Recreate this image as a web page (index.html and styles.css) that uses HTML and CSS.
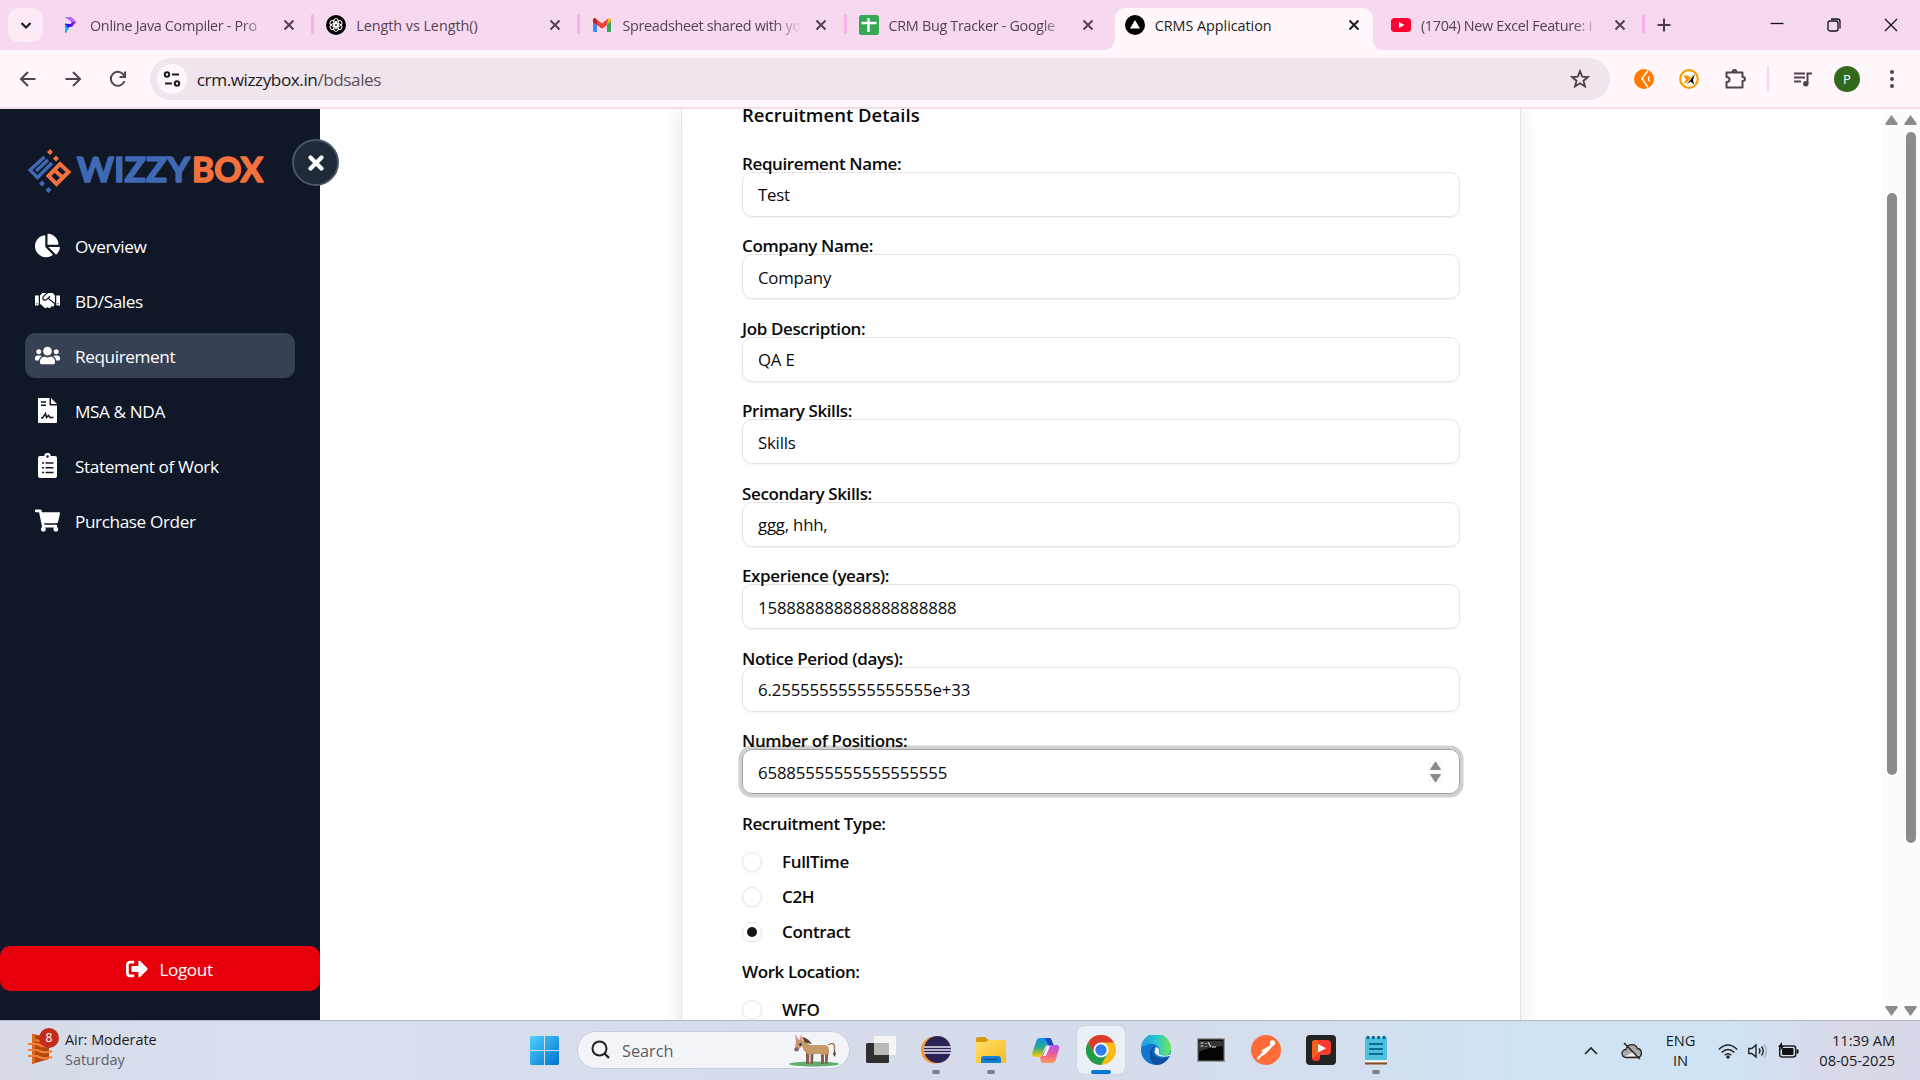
FILE: index.html
```html
<!DOCTYPE html>
<html lang="en">
<head>
<meta charset="utf-8">
<title>CRMS Application</title>
<link rel="stylesheet" href="styles.css">
</head>
<body>
<div class="screen">

<header class="tabstrip">
  <div class="tab-search"><svg width="16" height="16" viewBox="0 0 16 16"><path d="M3.500 6 8 10.500 12.500 6" fill="none" stroke="#1d1b20" stroke-width="2.200"/></svg></div>
  <div class="tab">
    <svg class="fav" viewBox="0 0 20 20"><path d="M5 2h6l5 5-4 5H8L12 7z" fill="#7a1cf0"/><path d="M5 2h6l5 5h-4z" fill="#b06bff"/><path d="M5 8l4 1v4l-3 5H5z" fill="#12b5f5"/><path d="M5 9h7l-4 4z" fill="#3b12e8"/></svg>
    <span class="tab-title fade">Online Java Compiler - Pro</span><span class="tab-x"><svg width="12" height="12" viewBox="0 0 12 12"><path d="M1.500 1.500l9 9M10.500 1.500l-9 9"/></svg></span>
  </div>
  <div class="tab">
    <svg class="fav" viewBox="0 0 20 20"><circle cx="10" cy="10" r="10"/><g fill="none" stroke="#fff" stroke-width="1"><ellipse cx="10" cy="7.500" rx="2.700" ry="4"/><ellipse cx="10" cy="7.500" rx="2.700" ry="4" transform="rotate(60 10 10)"/><ellipse cx="10" cy="7.500" rx="2.700" ry="4" transform="rotate(120 10 10)"/><ellipse cx="10" cy="7.500" rx="2.700" ry="4" transform="rotate(180 10 10)"/><ellipse cx="10" cy="7.500" rx="2.700" ry="4" transform="rotate(240 10 10)"/><ellipse cx="10" cy="7.500" rx="2.700" ry="4" transform="rotate(300 10 10)"/></g></svg>
    <span class="tab-title wide">Length vs Length()</span><span class="tab-x"><svg width="12" height="12" viewBox="0 0 12 12"><path d="M1.500 1.500l9 9M10.500 1.500l-9 9"/></svg></span>
  </div>
  <div class="tab">
    <svg class="fav" viewBox="0 0 20 20"><path d="M1 5h4v12H2.500Q1 17 1 15.500z" fill="#4285f4"/><path d="M15 5h4v10.500Q19 17 17.500 17H15z" fill="#34a853"/><path d="M15 5.500l1.500-2Q19 2.500 19 5.500L15 10z" fill="#fbbc04"/><path d="M1 5.500Q1 2.500 3.500 3.500L10 8.500l6-5-1 6.500-5 3.800L1 7z" fill="#ea4335"/><path d="M1 5.500Q1 2.500 3.500 3.500L5 5v5L1 7z" fill="#c5221f"/></svg>
    <span class="tab-title fade">Spreadsheet shared with yo</span><span class="tab-x"><svg width="12" height="12" viewBox="0 0 12 12"><path d="M1.500 1.500l9 9M10.500 1.500l-9 9"/></svg></span>
  </div>
  <div class="tab no-sep">
    <svg class="fav" viewBox="0 0 20 20"><rect width="20" height="20" rx="2.500" fill="#34a853"/><path d="M9.500 3v14M2.500 8h15" stroke="#fff" stroke-width="2.400"/></svg>
    <span class="tab-title fade">CRM Bug Tracker - Google</span><span class="tab-x"><svg width="12" height="12" viewBox="0 0 12 12"><path d="M1.500 1.500l9 9M10.500 1.500l-9 9"/></svg></span>
  </div>
  <div class="tab active no-sep">
    <svg class="fav" viewBox="0 0 20 20"><circle cx="10" cy="10" r="10"/><path d="M10 5l5 8.500H5z" fill="#fff"/></svg>
    <span class="tab-title wide">CRMS Application</span><span class="tab-x"><svg width="12" height="12" viewBox="0 0 12 12"><path d="M1.500 1.500l9 9M10.500 1.500l-9 9"/></svg></span>
  </div>
  <div class="tab">
    <svg class="fav" viewBox="0 0 20 20"><rect y="3" width="20" height="14" rx="3.500" fill="#ff0033"/><path d="M8 7l5.500 3L8 13z" fill="#fff"/></svg>
    <span class="tab-title fade">(1704) New Excel Feature: I</span><span class="tab-x"><svg width="12" height="12" viewBox="0 0 12 12"><path d="M1.500 1.500l9 9M10.500 1.500l-9 9"/></svg></span>
  </div>
  <div class="new-tab"><svg width="14" height="14" viewBox="0 0 14 14"><path d="M7 .5v13M.5 7h13" stroke="#4a3a46" stroke-width="2"/></svg></div>
  <div class="win-controls">
    <svg width="14" height="14" viewBox="0 0 14 14"><path d="M.5 5.500h13"/></svg>
    <svg width="14" height="14" viewBox="0 0 14 14"><rect x="1" y="3" width="10" height="10" rx="2"/><path d="M4 1h6.500q2.500 0 2.500 2.500V10.500"/></svg>
    <svg width="14" height="14" viewBox="0 0 14 14"><path d="M1 1l12 12M13 1L1 13"/></svg>
  </div>
</header>

<div class="toolbar">
  <div class="nav-buttons">
    <svg width="20" height="20" viewBox="0 0 20 20"><path d="M17.500 10H3.500M10 3l-7 7 7 7"/></svg>
    <svg width="20" height="20" viewBox="0 0 20 20"><path d="M2.500 10h14M10 3l7 7-7 7"/></svg>
    <svg width="20" height="20" viewBox="0 0 20 20"><path d="M16.500 12A7 7 0 1 1 15.500 5.700L17 7.500"/><path d="M17 2.500v5.500h-5.500"/></svg>
  </div>
  <div class="omnibox">
    <span class="site-info"><svg width="18" height="18" viewBox="0 0 18 18" fill="none" stroke="#1d1b20" stroke-width="2"><circle cx="4" cy="4.500" r="2.200"/><path d="M9 4.500h7M2 13.500h7"/><circle cx="14" cy="13.500" r="2.200"/></svg></span>
    <span class="url">crm.wizzybox.in<i>/bdsales</i></span>
    <svg class="star" width="20" height="20" viewBox="0 0 20 20"><path d="M10 2.200l2.200 5.400 5.800.4-4.500 3.700 1.500 5.700-5-3.200-5 3.200 1.500-5.700L2 8l5.800-.4z" fill="none" stroke="#4a4048" stroke-width="1.800"/></svg>
  </div>
  <div class="extensions">
    <svg width="20" height="20" viewBox="0 0 20 20"><circle cx="10" cy="10" r="10" fill="#ff7a00"/><path d="M14 1.500L8 9.500l6 9" fill="none" stroke="#fff" stroke-width="1.500"/><path d="M15.500 7q-2 3 0 5.500" fill="none" stroke="#fff" stroke-width="1.300"/></svg>
    <svg width="20" height="20" viewBox="0 0 20 20"><circle cx="10" cy="10" r="8.800" fill="#fff" stroke="#ff9d00" stroke-width="2.200"/><path d="M4.500 6.500h4.500l2 2L16 4 8.500 13l-4 2 2.500-4.500z" fill="#f59300"/><path d="M16 5l-8.500 10.500 4-3 3.500 3-1-4.500z" fill="#111"/></svg>
    <svg width="22" height="22" viewBox="0 0 22 22"><path d="M2.500 4.500h16v4.500q2.500 0 2.500 2t-2.500 2v6.500h-16V14q3 0 3-2.500T2.500 9zM8.500 4.500q0-2.500 2-2.500t2 2.500" fill="none" stroke="#54404f" stroke-width="2" stroke-linejoin="round"/></svg>
    <i class="tool-sep"></i>
    <svg width="20" height="20" viewBox="0 0 20 20"><path d="M1 4.500h11M1 8.500h11M1 12.500h7M14.500 14.500V4.500H19" fill="none" stroke="#54404f" stroke-width="2"/><circle cx="12.800" cy="14.700" r="2.700" fill="#54404f"/></svg>
    <span class="avatar">P</span>
    <svg width="6" height="20" viewBox="0 0 6 20" fill="#54404f"><circle cx="3" cy="3" r="2"/><circle cx="3" cy="10" r="2"/><circle cx="3" cy="17" r="2"/></svg>
  </div>
</div>

<main class="page">
  <aside class="sidebar">
    <button class="collapse"><svg width="16" height="16" viewBox="0 0 16 16"><path d="M2.500 2.500l11 11M13.500 2.500l-11 11" stroke="#fff" stroke-width="4.200" stroke-linecap="round"/></svg></button>
    <div class="logo">
      <svg width="238" height="46" viewBox="0 0 238 46">
        <g fill="none" stroke="#4069b5" stroke-width="3.400"><path d="M17.500 8L3 21l7.500 7.500L25 14M10.500 28.500L3 21M9 22l12-11"/></g>
        <path d="M23 0l3 3-3 3-3-3zM29 6.500l3 3-3 3-3-3z" fill="#f4713d"/>
        <path d="M15 31.500l3 3-3 3-3-3zM21.500 38l3 3-3 3-3-3z" fill="#4069b5"/>
        <path d="M21.500 27L33 15l8.500 8-12 12zM26.500 20.500l10 8.500" fill="none" stroke="#f4713d" stroke-width="4"/>
        <text x="50" y="32.500" textLength="113" lengthAdjust="spacingAndGlyphs" class="wordmark" fill="#4069b5" stroke="#4069b5">WIZZY</text>
        <text x="165" y="32.500" textLength="71" lengthAdjust="spacingAndGlyphs" class="wordmark" fill="#f4713d" stroke="#f4713d">BOX</text>
      </svg>
    </div>
    <nav class="menu">
      <a class="item"><svg viewBox="0 0 544 512"><path d="M527.790 288H290.500l158.030 158.030c6.040 6.040 15.980 6.530 22.190.68 38.700-36.460 65.320-85.610 73.130-140.860 1.340-9.460-6.510-17.850-16.060-17.850zm-15.830-64.800C503.720 103.740 408.260 8.280 288.800.04 279.680-.59 272 7.100 272 16.240V240h223.770c9.140 0 16.820-7.680 16.190-16.800zM224 288V50.710c0-9.550-8.390-17.400-17.840-16.060C86.990 51.490-4.100 155.600.14 280.370 4.500 408.510 114.830 513.590 243.030 511.980c50.400-.63 96.970-16.870 135.260-44.030 7.900-5.600 8.420-17.230 1.570-24.080L224 288z"/></svg><span>Overview</span></a>
      <a class="item"><svg viewBox="0 0 640 512"><path d="M434.700 64h-85.900c-8 0-15.700 3-21.600 8.400l-98.300 90c-.1.1-.2.3-.3.4-16.600 15.600-16.300 40.500-2.100 56 12.700 13.900 39.400 17.600 56.100 2.700.1-.1.3-.1.4-.2l79.900-73.200c6.500-5.900 16.700-5.500 22.600 1 6 6.500 5.500 16.600-1 22.600l-26.100 23.900L504 313.800c2.900 2.400 5.500 5 7.900 7.700V128l-54.600-54.600c-5.900-6-14.100-9.400-22.600-9.400zM544 128.200v223.900c0 17.700 14.300 32 32 32h64V128.200h-96zm48 223.900c-8.800 0-16-7.200-16-16s7.200-16 16-16 16 7.200 16 16-7.200 16-16 16zM0 384h64c17.700 0 32-14.300 32-32V128.200H0V384zm48-63.900c8.800 0 16 7.200 16 16s-7.200 16-16 16-16-7.200-16-16c0-8.900 7.200-16 16-16zm435.900 18.600L334.600 217.500l-30 27.500c-29.700 27.100-75.200 24.500-101.700-4.400-26.900-29.400-24.800-74.900 4.400-101.700L289.100 64h-83.800c-8.500 0-16.600 3.400-22.600 9.400L128 128v223.900h18.300l90.500 81.900c27.400 22.300 67.700 18.100 90-9.300l.2-.2 17.900 15.500c15.900 13 39.400 10.500 52.300-5.400l31.400-38.600 5.400 4.400c13.700 11.100 33.900 9.100 45-4.700l9.500-11.700c11.200-13.800 9.100-33.900-4.600-45.100z"/></svg><span>BD/Sales</span></a>
      <a class="item current"><svg viewBox="0 0 640 512"><path d="M96 224c35.300 0 64-28.700 64-64s-28.700-64-64-64-64 28.700-64 64 28.700 64 64 64zm448 0c35.300 0 64-28.700 64-64s-28.700-64-64-64-64 28.700-64 64 28.700 64 64 64zm32 32h-64c-17.600 0-33.500 7.100-45.100 18.600 40.300 22.100 68.900 62 75.100 109.400h66c17.700 0 32-14.300 32-32v-32c0-35.300-28.700-64-64-64zm-256 0c61.900 0 112-50.100 112-112S381.900 32 320 32 208 82.100 208 144s50.100 112 112 112zm76.800 32h-8.300c-20.800 10-43.900 16-68.500 16s-47.600-6-68.500-16h-8.300C179.600 288 128 339.600 128 403.200V432c0 26.500 21.500 48 48 48h288c26.500 0 48-21.500 48-48v-28.800c0-63.600-51.600-115.200-115.200-115.200zm-223.700-13.400C161.500 263.100 145.600 256 128 256H64c-35.300 0-64 28.700-64 64v32c0 17.700 14.300 32 32 32h65.900c6.300-47.400 34.900-87.300 75.200-109.400z"/></svg><span>Requirement</span></a>
      <a class="item"><svg viewBox="0 0 25 25"><path d="M4 0H14.500V7.500H22V24q0 1-1 1H4q-1 0-1-1V1q0-1 1-1zM16 0l6 6h-6z"/><path d="M6 4h5M6 7.200h5" fill="none" stroke="#101828" stroke-width="1.500"/><path d="M6 20h1.500l3-4.500 1 4 2-2 1.500 2h3.500" fill="none" stroke="#101828" stroke-width="1.500"/></svg><span>MSA &amp; NDA</span></a>
      <a class="item"><svg viewBox="0 0 25 25"><path d="M5 3h4.300a3.200 3.200 0 0 1 6.400 0H20q2 0 2 2v18q0 2-2 2H5q-2 0-2-2V5q0-2 2-2z"/><circle cx="12.500" cy="3.500" r="1.200" fill="#101828"/><path d="M7 10h2M7 14.700h2M7 19.400h2M10.500 10h8M10.500 14.700h8M10.500 19.400h8" stroke="#101828" stroke-width="1.500"/></svg><span>Statement of Work</span></a>
      <a class="item"><svg viewBox="0 0 576 512"><path d="M528.120 301.319l47.273-208C578.806 78.301 567.391 64 551.990 64H159.208l-9.166-44.810C147.758 8.021 137.930 0 126.529 0H24C10.745 0 0 10.745 0 24v16c0 13.255 10.745 24 24 24h69.883l70.248 343.435C147.325 417.100 136 435.222 136 456c0 30.928 25.072 56 56 56s56-25.072 56-56c0-15.674-6.447-29.835-16.824-40h209.647C430.447 426.165 424 440.326 424 456c0 30.928 25.072 56 56 56s56-25.072 56-56c0-22.172-12.888-41.332-31.579-50.405l5.517-24.276c3.413-15.018-8.002-29.319-23.403-29.319H218.117l-6.545-32h293.145c11.206 0 20.920-7.754 23.403-18.681z"/></svg><span>Purchase Order</span></a>
    </nav>
    <a class="logout"><svg width="22" height="22" viewBox="0 0 512 512"><path d="M497 273L329 441c-15 15-41 4.500-41-17v-96H152c-13.300 0-24-10.700-24-24v-96c0-13.300 10.700-24 24-24h136V88c0-21.400 25.900-32 41-17l168 168c9.300 9.400 9.300 24.600 0 34zM192 436v-40c0-6.600-5.400-12-12-12H96c-17.700 0-32-14.300-32-32V160c0-17.700 14.300-32 32-32h84c6.600 0 12-5.400 12-12V76c0-6.600-5.400-12-12-12H96c-53 0-96 43-96 96v192c0 53 43 96 96 96h84c6.600 0 12-5.400 12-12z"/></svg><span>Logout</span></a>
  </aside>

  <section class="content">
    <form class="card">
      <h2>Recruitment Details</h2>
      <div class="field"><label>Requirement Name:</label><div class="input">Test</div></div>
      <div class="field"><label>Company Name:</label><div class="input">Company</div></div>
      <div class="field"><label>Job Description:</label><div class="input">QA E</div></div>
      <div class="field"><label>Primary Skills:</label><div class="input">Skills</div></div>
      <div class="field"><label>Secondary Skills:</label><div class="input">ggg, hhh,</div></div>
      <div class="field"><label>Experience (years):</label><div class="input digits">158888888888888888888</div></div>
      <div class="field"><label>Notice Period (days):</label><div class="input digits">6.25555555555555555e+33</div></div>
      <div class="field"><label>Number of Positions:</label><div class="input digits focused">65885555555555555555<svg width="15" height="24" viewBox="0 0 15 24"><rect width="15" height="24" fill="#fafafa"/><path d="M7.500 2l5 7.500h-10zM7.500 22l5-7.500h-10z" fill="#8b8b8b" stroke="#8b8b8b" stroke-linejoin="round"/></svg></div></div>
      <div class="group-title">Recruitment Type:</div>
      <div class="radios">
        <div class="radio"><i></i>FullTime</div>
        <div class="radio"><i></i>C2H</div>
        <div class="radio checked"><i></i>Contract</div>
      </div>
      <div class="group-title second">Work Location:</div>
      <div class="radios">
        <div class="radio"><i></i>WFO</div>
      </div>
    </form>
  </section>

  <div class="scrollbar inner"><i class="up"></i><b></b><i class="down"></i></div>
  <div class="scrollbar outer"><i class="up"></i><b></b><i class="down"></i></div>
</main>

<footer class="taskbar">
  <div class="weather">
    <div class="weather-icon"><svg width="28" height="32" viewBox="0 0 28 32"><path d="M5 2l17 3v22L5 32z" fill="#b5460f"/><path d="M5 2v30l3-1V2.500z" fill="#e0671c"/><path d="M1 12h9q6 4 15 1M1 18h9q6 4 15 1M1 24h9q6 4 15 1M8 8q6 2 13 0" fill="none" stroke="#f0813a" stroke-width="2.200"/></svg><span class="badge">8</span></div>
    <div class="weather-text"><span>Air: Moderate</span><span class="dim">Saturday</span></div>
  </div>
  <div class="apps">
    <svg class="start" width="29" height="29" viewBox="0 0 29 29"><defs><linearGradient id="win" x1="0" y1="0" x2="1" y2="1" ><stop offset="0" stop-color="#4fd0ff"/><stop offset="1" stop-color="#0072d0"/></linearGradient><linearGradient id="folder" x1="0" y1="0" x2="1" y2="1"><stop offset="0" stop-color="#ffdf6b"/><stop offset="1" stop-color="#fbbb1f"/></linearGradient><linearGradient id="edge" x1="0" y1="0" x2="1" y2="0"><stop offset="0" stop-color="#1f9be0"/><stop offset=".5" stop-color="#2cc4d0"/><stop offset="1" stop-color="#6ee84f"/></linearGradient><linearGradient id="cop1" x1="0" y1="0" x2="0" y2="1"><stop offset="0" stop-color="#1292ee"/><stop offset=".5" stop-color="#2ba98a"/><stop offset="1" stop-color="#ffd100"/></linearGradient><linearGradient id="cop2" x1="0" y1="0" x2="0" y2="1"><stop offset="0" stop-color="#a95bf5"/><stop offset=".5" stop-color="#ec5a9a"/><stop offset="1" stop-color="#ff9a5a"/></linearGradient></defs><path d="M0 1.500Q0 0 1.500 0H14v14H0zM15 0h12.500Q29 0 29 1.500V14H15zM0 15h14v14H1.500Q0 29 0 27.500zM15 15h14v12.500q0 1.500-1.500 1.500H15z" fill="url(#win)"/></svg>
    <div class="search"><svg width="20" height="20" viewBox="0 0 20 20"><path d="M13.500 13.500l4.500 4.500" stroke="#222" stroke-width="2.400"/><circle cx="8.500" cy="8.500" r="7" fill="none" stroke="#222" stroke-width="2"/></svg><span>Search</span>
      <svg width="52" height="34" viewBox="0 0 52 34"><ellipse cx="26" cy="31" rx="25" ry="2.500" fill="#5fae6c"/><path d="M18 19h3.500l-.5 12h-3zM22.500 19l3 1-.5 11h-2.500zM33 19l3 1v11h-3zM37 18l3.500 1-1 12H37z" fill="#86604f"/><path d="M8 8q4-3 8 0l6 4h14q5 0 5 5v3l-4 2-5-1H20l-4-3-2-5-4 4q-3 1-3-2z" fill="#c49a68"/><path d="M7 1l4 6-3 2zM13 1l1.500 6-3 1z" fill="#e98b7d"/><path d="M14 4q6 1 10 7l-7-1.500z" fill="#5a4038"/><path d="M40 12q7-4 6.500 3v4" fill="none" stroke="#a97b50" stroke-width="1.400"/><path d="M46.500 17l1.500 4-1.500 3-1.500-3z" fill="#6a473a"/><ellipse cx="8.500" cy="16.500" rx="2.400" ry="2" fill="#82637b"/><circle cx="12.500" cy="11.500" r="1.300" fill="#28255a"/></svg>
    </div>
    <div class="app first"><svg width="30" height="30" viewBox="0 0 30 30"><rect y="8" width="23" height="20" rx="1.500" fill="#30302f"/><rect x="8" y="1" width="22" height="19" rx="1.500" fill="#f5f5f5"/><rect x="8" y="8" width="15" height="12" fill="#b9b9b9"/></svg></div>
    <div class="app open"><svg width="30" height="30" viewBox="0 0 30 30"><circle cx="13.500" cy="15" r="13.500" fill="#f7962b"/><circle cx="16.500" cy="14.500" r="13.500" fill="#2c2255"/><path d="M3 12h27M3 15h27M3 18h27" stroke="#e9e6f5" stroke-width="1.600"/></svg></div>
    <div class="app open"><svg width="30" height="30" viewBox="0 0 30 30"><path d="M0 4q0-2 2-2h7q1 0 2 2l2 1v4H0z" fill="#d99a0b"/><path d="M0 7h10l3-2h17v23H0z" fill="url(#folder)"/><path d="M5 28v-4q0-3 3-3h14q3 0 3 3v4z" fill="#1380d4"/><path d="M8.500 24.500h13" stroke="#0a4f94" stroke-width="1.300"/></svg></div>
    <div class="app"><svg width="30" height="30" viewBox="0 0 30 30"><path d="M9 3h9q2 0 2.500 2l2 5h-5q-3 0-4 3l-2 6q-1 3-3 3H4q-3 0-3-3l4-12q1-4 4-4z" fill="url(#cop1)"/><path d="M14 3h4q2 0 2.500 2l2 5h-5l-3-5z" fill="#1c49c8"/><path d="M21 28h-9q-2 0-2-2l-1-4q2 0 3-3l3-6q1-3 4-3h6q4 0 3 4l-3 10q-1 4-4 4z" fill="url(#cop2)"/><path d="M16 11h3l-4 10h-3z" fill="#eef0f8"/></svg></div>
    <div class="app running"><svg width="30" height="30" viewBox="0 0 30 30"><circle cx="15" cy="15" r="15" fill="#f9bd1a"/><path d="M2 7.500A15 15 0 0 1 28 7.500H15L8.500 18.700z" fill="#de3b2f"/><path d="M2 7.500A15 15 0 0 0 15 30l6.500-11.300-13 0z" fill="#1e9c4c"/><circle cx="15" cy="15" r="7.500" fill="#fff"/><circle cx="15" cy="15" r="5.700" fill="#2f7ded"/></svg></div>
    <div class="app"><svg width="30" height="30" viewBox="0 0 30 30"><circle cx="15" cy="15" r="15" fill="#1275cf"/><path d="M0 13A15 15 0 0 1 30 14q0 7-8 7-5 0-4-3 2-5-3-8T3 11z" fill="url(#edge)"/><path d="M9 21Q8 13 14 11q-5 6 0 10 6 5 15-.5Q24 30 15 30 9 28 9 21z" fill="#0c4f9e"/><path d="M15 12q-3 5 1 8t13 1l1-2q-5 3-11 1-2-1-1-3 1-4-3-5z" fill="#e6f0f8"/></svg></div>
    <div class="app"><svg width="28" height="24" viewBox="0 0 28 24"><rect x=".7" y=".7" width="26.600" height="22.600" fill="#050505" stroke="#999" stroke-width="1.400"/><path d="M1.500 3H26.500v5Q12 9 1.500 14z" fill="#353535"/><path d="M3.500 5h3M3.500 8h3M9 5v1M9 8v1M11 4l3 5M15 9h4" stroke="#ddd" stroke-width="1.200"/></svg></div>
    <div class="app"><svg width="30" height="30" viewBox="0 0 30 30"><circle cx="15" cy="15" r="15" fill="#ff6c37"/><circle cx="21.500" cy="8" r="2.700" fill="#fff"/><path d="M21 11L11 19l-4 4.500M19.500 11l-8 5M19 13l-5 5-3 2" fill="none" stroke="#fff" stroke-width="1.900" stroke-linecap="round"/></svg></div>
    <div class="app"><svg width="30" height="30" viewBox="0 0 30 30"><rect width="30" height="30" rx="4" fill="#232323"/><path d="M6 9q0-4 4-4h11q4 0 4 4v7q0 4-4 4h-7v3q0 3-4 3t-4-3z" fill="#fb3a30"/><path d="M6 8q0-3 3-3h3v15l-4 2q-2 1-2 2z" fill="#f4611a"/><path d="M12 9l8 4.200-8 4.300z" fill="#fff"/></svg></div>
    <div class="app open"><svg width="24" height="30" viewBox="0 0 24 30"><path d="M1 3h22v24H1z" fill="#4fc0df"/><path d="M1 25h22v2H1z" fill="#eee"/><path d="M1 27.500h22v2H1z" fill="#8a4a1c"/><path d="M5 9h14M5 14h14M5 19h14" stroke="#0a6e94" stroke-width="1.800"/><g fill="#0a6e94"><circle cx="4" cy="2.500" r="1.800"/><circle cx="9.300" cy="2.500" r="1.800"/><circle cx="14.600" cy="2.500" r="1.800"/><circle cx="20" cy="2.500" r="1.800"/></g></svg></div>
  </div>
  <div class="tray">
    <svg width="14" height="10" viewBox="0 0 14 10"><path d="M1 8l6-6 6 6" fill="none" stroke="#222" stroke-width="1.700"/></svg>
    <svg class="cloud" width="22" height="18" viewBox="0 0 22 18"><path d="M5 15.500a4 4 0 0 1 0-8 6 6 0 0 1 11.500-1 4.600 4.600 0 0 1 .5 9z" fill="#aaa" stroke="#222" stroke-width="1.300"/><path d="M4 14.500l8-4.500 7 4z" fill="#eee"/><path d="M3 1l16 16" stroke="#222" stroke-width="1.600"/></svg>
    <span class="lang"><span>ENG</span><span>IN</span></span>
    <svg width="20" height="16" viewBox="0 0 20 16"><g fill="none" stroke="#222" stroke-width="1.500"><path d="M.7 6.500q9.300-9 18.600 0M3.700 9.500q6.300-6 12.600 0M6.700 12.300q3.300-3 6.600 0"/></g><circle cx="10" cy="14" r="1.700" fill="#222"/></svg>
    <svg class="speaker" width="20" height="16" viewBox="0 0 20 16"><g fill="none" stroke="#222" stroke-width="1.400"><path d="M.8 5.500h3L8 2v12l-4.200-3.500h-3zM11 5.500q2 2.500 0 5M13.500 3.500q3.500 4.500 0 9"/><path d="M16 1.500q5 6.500 0 13" stroke="#a8b0bb"/></g></svg>
    <svg class="battery" width="21" height="18" viewBox="0 0 21 18"><rect x="1.700" y="4" width="16" height="11" rx="2.500" fill="none" stroke="#222" stroke-width="1.500"/><rect x="4" y="6" width="11.500" height="7" rx="1" fill="#111"/><path d="M18.500 7.500h2v4h-2zM4 0L0 5h3L2 9l4-5H4z" fill="#111"/></svg>
    <span class="clock"><span>11:39 AM</span><span>08-05-2025</span></span>
  </div>
</footer>
</div>
</body>
</html>
```
FILE: styles.css
```css
* { box-sizing: border-box; }
body { margin: 0; font-family: "Open Sans", "Noto Sans", sans-serif; overflow: hidden; }
svg { display: block; flex: none; }
.screen { width: 1920px; height: 1080px; display: flex; flex-direction: column; overflow: hidden; background: #fff; }

/* Tab strip */
.tabstrip { height: 50px; flex: none; display: flex; background: #f7d9ef; }
.tab-search { width: 35px; height: 34px; margin: 8px 3px 0 8px; border-radius: 11px; background: #fdeaf6; display: grid; place-items: center; }
.tab { width: 266.2px; height: 50px; padding-left: 14px; display: flex; align-items: center; flex: none; position: relative; color: #54424f; }
.tab::after { content: ""; position: absolute; right: -2px; top: 14px; width: 3px; height: 20px; border-radius: 2px; background: #f6b2ea; }
.tab.no-sep::after { display: none; }
.fav { width: 20px; height: 20px; }
.tab-title { width: 181px; margin-left: 10px; white-space: nowrap; font-size: 14.400px; letter-spacing: -.32px; }
.tab-title.wide { letter-spacing: -.05px; }
.fade { mask-image: linear-gradient(90deg, #000 84%, transparent 99%); }
.tab-x { width: 34px; margin-left: 1px; display: grid; place-items: center; }
.tab-x path { stroke: currentColor; stroke-width: 2; }
.tab.active { color: #1d1b20; }
.tab.active::before { content: ""; position: absolute; left: -8px; right: -8px; top: 8px; height: 42px; background: radial-gradient(circle at 0 30px, transparent 11.500px, #fff7fb 12px) 0 0 / 12px 42px no-repeat, radial-gradient(circle at 100% 30px, transparent 11.500px, #fff7fb 12px) 100% 0 / 12px 42px no-repeat; clip-path: polygon(0 30px, 12px 30px, 12px 0, calc(100% - 12px) 0, calc(100% - 12px) 30px, 100% 30px, 100% 100%, 0 100%); }
.tab.active { background: linear-gradient(#fff7fb, #fff7fb) 4px 8px / 258px 42px no-repeat; border-radius: 0; clip-path: path("M-8 50Q4 50 4 38V20Q4 8 16 8H250Q262 8 262 20V38Q262 50 274 50Z"); }
.new-tab { width: 42px; display: grid; place-items: center; }
.win-controls { margin-left: auto; padding-right: 22px; display: flex; align-items: center; gap: 43px; }
.win-controls path, .win-controls rect { fill: none; stroke: #111; stroke-width: 1.300; }

/* Toolbar */
.toolbar { height: 59px; flex: none; padding: 0 25px 0 18px; display: flex; align-items: center; background: #fff7fb; border-bottom: 2px solid #f0dfea; }
.nav-buttons { width: 132px; display: flex; gap: 25px; }
.nav-buttons path { fill: none; stroke: #54404f; stroke-width: 2; }
.omnibox { width: 1462px; height: 42px; padding: 0 20px 0 7px; border-radius: 21px; background: #f0e4ee; display: flex; align-items: center; }
.site-info { width: 30px; height: 30px; border-radius: 50%; background: #fff7fb; display: grid; place-items: center; }
.url { margin: 2px 0 0 10px; flex: 1; font-size: 17.200px; letter-spacing: -.45px; color: #1d1b20; }
.url i { font-style: normal; color: #5b5058; }
.extensions { flex: 1; margin-left: 24px; display: flex; align-items: center; }
.extensions > :nth-child(2) { margin-left: 25px; }
.extensions > :nth-child(3) { margin-left: 25px; }
.tool-sep { width: 2px; height: 25px; margin: 0 24px 0 21px; background: #fbd5f2; }
.avatar { width: 26px; height: 26px; margin: 0 29px 0 21px; border-radius: 50%; background: #33691e; color: #fff; font-size: 13px; line-height: 26px; text-align: center; }

/* Page */
.page { height: 911px; flex: none; display: flex; overflow: hidden; }
.sidebar { width: 320px; position: relative; background: #101828; display: flex; flex-direction: column; color: #fff; font-size: 17.200px; letter-spacing: -.4px; }
.collapse { position: absolute; left: 292px; top: 30px; width: 47px; height: 47px; padding: 0; border: 2px solid #4a5565; border-radius: 50%; background: #1e2939; display: grid; place-items: center; }
.logo { padding: 40px 0 0 27px; height: 114px; }
.wordmark { font-family: Lato, sans-serif; font-weight: 700; font-size: 35px; letter-spacing: 0; stroke-width: 1.600; stroke-linejoin: round; }
.menu { display: grid; gap: 10px; padding: 0 25px; }
.item { height: 45px; padding-left: 10px; border-radius: 10px; display: flex; align-items: center; gap: 15px; }
.item span, .logout span { margin-top: 2px; }
.item svg { width: 25px; height: 25px; fill: #fff; }
.item.current { background: #364153; }
.logout { height: 45px; margin: auto 0 29px; border-radius: 10px; background: #e7000b; display: flex; align-items: center; justify-content: center; gap: 11px; padding-left: 19px; }
.logout svg { fill: #fff; }

.content { flex: 1; padding-left: 361px; overflow: hidden; }
.card { width: 840px; height: 1000px; padding: 0 60px; border: 1px solid #e5e5e5; border-top: 0; box-shadow: 0 0 18px rgba(0,0,0,.1); color: #0a0a0a; }
h2 { margin: 0 0 25.800px; height: 15px; line-height: 11px; font-size: 18.500px; font-weight: 600; }
.field { height: 82.500px; }
label { display: block; height: 22px; line-height: 27px; font-size: 17px; font-weight: 600; letter-spacing: -.38px; }
.input { height: 45px; padding: 1px 16px 0 15px; border: 1px solid #e5e5e5; border-radius: 10px; box-shadow: 0 1px 2px rgba(0,0,0,.06); display: flex; align-items: center; justify-content: space-between; font-size: 16.800px; letter-spacing: -.2px; }
.digits { letter-spacing: -.14px; }
.focused { border-color: #a1a1a1; box-shadow: 0 0 0 3.500px #d0d0d0; }
.group-title { height: 27px; margin-top: 1px; line-height: 26px; font-size: 17px; font-weight: 600; letter-spacing: -.4px; }
.radios { padding-top: 14px; display: grid; gap: 15px; }
.radio { height: 20px; display: flex; align-items: center; gap: 20px; font-size: 17px; font-weight: 600; letter-spacing: -.35px; line-height: 22px; }
.radio i { width: 20px; height: 20px; border: 1px solid #e5e5e5; border-radius: 50%; box-shadow: 0 1px 2px rgba(0,0,0,.06); display: grid; place-items: center; }
.radio.checked i::before { content: ""; width: 10px; height: 10px; border-radius: 50%; background: #171717; }
.second { margin-top: 17px; }

.scrollbar { width: 19px; padding: 6px 0 4px; background: #fcfcfc; display: flex; flex-direction: column; align-items: center; }
.scrollbar b { width: 10px; border-radius: 5px; background: #8b8b8b; }
.scrollbar i { width: 13px; height: 10px; background: #8b8b8b; }
.up { clip-path: polygon(50% 0, 100% 90%, 90% 100%, 10% 100%, 0 90%); }
.down { clip-path: polygon(50% 100%, 100% 10%, 90% 0, 10% 0, 0 10%); margin-top: auto; }
.inner b { height: 582px; margin-top: 68px; }
.outer b { height: 711px; margin-top: 7px; }

/* Taskbar */
.taskbar { height: 60px; flex: none; border-top: 1px solid #b2b7c4; display: flex; background: linear-gradient(90deg, #d7dbe8 0, #d8e0ee 15%, #d6dbea 45%, #d4deed 68%, #d0e3f3 80%, #d0e3f5 90%, #d9d9e8 96%, #d7d8e7 100%); color: #191b20; }
.weather { width: 530px; padding-left: 27px; display: flex; gap: 6px; }
.weather-icon { width: 32px; position: relative; padding-top: 11px; }
.badge { position: absolute; left: 12px; top: 7px; width: 20px; height: 20px; border-radius: 50%; background: #c42b1c; color: #fff; font-size: 12px; line-height: 20px; text-align: center; }
.weather-text { padding-top: 9px; display: grid; grid-auto-rows: 20px; line-height: 20px; font-size: 14.400px; align-content: start; }
.dim { color: #5c6069; }
.apps { display: flex; }
.start { margin: 15px 18px 0 0; }
.search { width: 273px; height: 38px; margin: 10px 3px 0 0; padding: 0 9px 0 13px; border: 1px solid #c6cede; border-radius: 19px; background: #f2f4f9; display: flex; align-items: center; font-size: 16.300px; color: #5d5d60; }
.search span { margin: 2px 0 0 11px; flex: 1; }
.app { width: 48px; height: 48px; margin: 5px 7px 0 0; border-radius: 6px; display: grid; place-items: center; position: relative; }
.app.first { margin-left: 4px; }
.app.open::after { content: ""; position: absolute; bottom: 0; left: 20px; width: 8px; height: 4px; border-radius: 2px; background: #7d818b; }
.app.running { background: #ebeff7; box-shadow: 0 0 1px #9aa; }
.app.running::after { content: ""; position: absolute; bottom: 0; left: 14px; width: 20px; height: 4px; border-radius: 2px; background: #0078d4; }
.tray { margin-left: auto; padding-right: 25px; display: flex; align-items: center; font-size: 14.700px; letter-spacing: -.1px; }
.cloud { margin-left: 23px; }
.lang { width: 75px; text-align: center; display: grid; grid-auto-rows: 20px; line-height: 20px; }
.speaker { margin-left: 10px; }
.battery { margin-left: 10px; }
.clock { width: 96px; text-align: right; display: grid; grid-auto-rows: 20px; line-height: 20px; }
.lang, .clock { margin-top: -2px; }
```
